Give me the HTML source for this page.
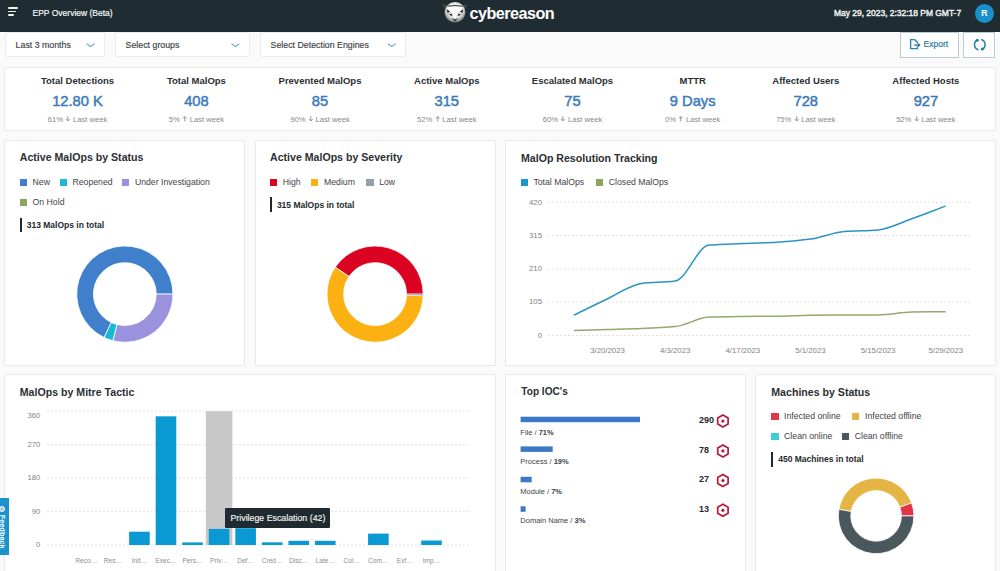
<!DOCTYPE html><html><head><meta charset="utf-8"><style>
html,body{margin:0;padding:0;}
body{width:1000px;height:571px;overflow:hidden;position:relative;background:#fafafa;font-family:"Liberation Sans", sans-serif;}
.t{position:absolute;white-space:nowrap;line-height:1;}
.card{position:absolute;background:#fff;border:1px solid #e9e9e9;box-sizing:border-box;border-radius:2px;}
svg{position:absolute;left:0;top:0;}
</style></head><body>
<div style="position:absolute;left:0px;top:0px;width:1000px;height:32px;background:#1f2d32;"></div>
<div style="position:absolute;left:7.9px;top:7.25px;width:10.5px;height:1.7px;background:#eef1f2;border-radius:1px;"></div>
<div style="position:absolute;left:7.9px;top:10.55px;width:8.1px;height:1.7px;background:#eef1f2;border-radius:1px;"></div>
<div style="position:absolute;left:7.9px;top:13.85px;width:5.7px;height:1.7px;background:#eef1f2;border-radius:1px;"></div>
<div class="t" style="left:32.50px;top:8.60px;font-size:8.5px;color:#f2f4f5;font-weight:400;-webkit-text-stroke:0.2px #f2f4f5;">EPP Overview (Beta)</div>
<div class="t" style="left:834.00px;top:8.65px;font-size:8.45px;color:#f2f3f4;font-weight:400;-webkit-text-stroke:0.4px #f2f3f4;">May 29, 2023, 2:32:18 PM GMT-7</div>
<div style="position:absolute;left:974.8px;top:3.5px;width:19px;height:19px;border-radius:50%;background:#1b8fc9;"></div>
<div class="t" style="left:684.40px;width:600px;text-align:center;top:8.72px;font-size:8.6px;color:#fff;font-weight:700;">R</div>
<div class="t" style="left:469.60px;top:5.09px;font-size:16.2px;color:#fff;font-weight:700;letter-spacing:-0.55px;">cybereason</div>
<div style="position:absolute;left:5px;top:32px;width:100px;height:25px;background:#fff;border:1px solid #ececec;box-sizing:border-box;border-radius:2px;"></div>
<div class="t" style="left:15.60px;top:41.15px;font-size:8.8px;color:#3d4246;font-weight:400;-webkit-text-stroke:0.15px #3d4246;">Last 3 months</div>
<div style="position:absolute;left:115px;top:32px;width:135px;height:25px;background:#fff;border:1px solid #ececec;box-sizing:border-box;border-radius:2px;"></div>
<div class="t" style="left:125.60px;top:41.15px;font-size:8.8px;color:#3d4246;font-weight:400;-webkit-text-stroke:0.15px #3d4246;">Select groups</div>
<div style="position:absolute;left:260px;top:32px;width:146px;height:25px;background:#fff;border:1px solid #ececec;box-sizing:border-box;border-radius:2px;"></div>
<div class="t" style="left:270.60px;top:41.15px;font-size:8.8px;color:#3d4246;font-weight:400;-webkit-text-stroke:0.15px #3d4246;">Select Detection Engines</div>
<div style="position:absolute;left:900px;top:32px;width:58.6px;height:25.6px;background:#fff;border:1px solid #b9cdd5;box-sizing:border-box;"></div>
<div class="t" style="left:923.60px;top:39.60px;font-size:8.5px;color:#2b7ca0;font-weight:400;-webkit-text-stroke:0.2px #2b7ca0;">Export</div>
<div style="position:absolute;left:963px;top:32px;width:32.3px;height:25.6px;background:#fff;border:1px solid #b9cdd5;box-sizing:border-box;"></div>
<div class="card" style="left:4px;top:67px;width:992px;height:64px;"></div>
<div class="t" style="left:-222.50px;width:600px;text-align:center;top:76.26px;font-size:9.5px;color:#2b2f33;font-weight:700;">Total Detections</div>
<div class="t" style="left:-222.50px;width:600px;text-align:center;top:93.56px;font-size:14.7px;color:#3d7aba;font-weight:400;-webkit-text-stroke:0.5px #3d7aba;">12.80 K</div>
<div class="t" style="left:-222.50px;width:600px;text-align:center;top:115.87px;font-size:7.6px;color:#878787;font-weight:400;">61%<svg style="position:static;display:inline-block;vertical-align:0px;margin:0 2.2px 0 2.4px" width="5.5" height="5.6" viewBox="0 0 5.5 5.6"><path d="M2.75,0.2 V5 M0.9,3.1 L2.75,5 L4.6,3.1" fill="none" stroke="#8a8a8a" stroke-width="0.9"/></svg>Last week</div>
<div class="t" style="left:-103.60px;width:600px;text-align:center;top:76.26px;font-size:9.5px;color:#2b2f33;font-weight:700;">Total MalOps</div>
<div class="t" style="left:-103.60px;width:600px;text-align:center;top:93.56px;font-size:14.7px;color:#3d7aba;font-weight:400;-webkit-text-stroke:0.5px #3d7aba;">408</div>
<div class="t" style="left:-103.60px;width:600px;text-align:center;top:115.87px;font-size:7.6px;color:#878787;font-weight:400;">5%<svg style="position:static;display:inline-block;vertical-align:0px;margin:0 2.2px 0 2.4px" width="5.5" height="5.6" viewBox="0 0 5.5 5.6"><path d="M2.75,5.4 V0.6 M0.9,2.5 L2.75,0.6 L4.6,2.5" fill="none" stroke="#8a8a8a" stroke-width="0.9"/></svg>Last week</div>
<div class="t" style="left:20.00px;width:600px;text-align:center;top:76.26px;font-size:9.5px;color:#2b2f33;font-weight:700;">Prevented MalOps</div>
<div class="t" style="left:20.00px;width:600px;text-align:center;top:93.56px;font-size:14.7px;color:#3d7aba;font-weight:400;-webkit-text-stroke:0.5px #3d7aba;">85</div>
<div class="t" style="left:20.00px;width:600px;text-align:center;top:115.87px;font-size:7.6px;color:#878787;font-weight:400;">90%<svg style="position:static;display:inline-block;vertical-align:0px;margin:0 2.2px 0 2.4px" width="5.5" height="5.6" viewBox="0 0 5.5 5.6"><path d="M2.75,0.2 V5 M0.9,3.1 L2.75,5 L4.6,3.1" fill="none" stroke="#8a8a8a" stroke-width="0.9"/></svg>Last week</div>
<div class="t" style="left:146.80px;width:600px;text-align:center;top:76.26px;font-size:9.5px;color:#2b2f33;font-weight:700;">Active MalOps</div>
<div class="t" style="left:146.80px;width:600px;text-align:center;top:93.56px;font-size:14.7px;color:#3d7aba;font-weight:400;-webkit-text-stroke:0.5px #3d7aba;">315</div>
<div class="t" style="left:146.80px;width:600px;text-align:center;top:115.87px;font-size:7.6px;color:#878787;font-weight:400;">52%<svg style="position:static;display:inline-block;vertical-align:0px;margin:0 2.2px 0 2.4px" width="5.5" height="5.6" viewBox="0 0 5.5 5.6"><path d="M2.75,5.4 V0.6 M0.9,2.5 L2.75,0.6 L4.6,2.5" fill="none" stroke="#8a8a8a" stroke-width="0.9"/></svg>Last week</div>
<div class="t" style="left:272.50px;width:600px;text-align:center;top:76.26px;font-size:9.5px;color:#2b2f33;font-weight:700;">Escalated MalOps</div>
<div class="t" style="left:272.50px;width:600px;text-align:center;top:93.56px;font-size:14.7px;color:#3d7aba;font-weight:400;-webkit-text-stroke:0.5px #3d7aba;">75</div>
<div class="t" style="left:272.50px;width:600px;text-align:center;top:115.87px;font-size:7.6px;color:#878787;font-weight:400;">60%<svg style="position:static;display:inline-block;vertical-align:0px;margin:0 2.2px 0 2.4px" width="5.5" height="5.6" viewBox="0 0 5.5 5.6"><path d="M2.75,0.2 V5 M0.9,3.1 L2.75,5 L4.6,3.1" fill="none" stroke="#8a8a8a" stroke-width="0.9"/></svg>Last week</div>
<div class="t" style="left:392.70px;width:600px;text-align:center;top:76.26px;font-size:9.5px;color:#2b2f33;font-weight:700;">MTTR</div>
<div class="t" style="left:392.70px;width:600px;text-align:center;top:93.56px;font-size:14.7px;color:#3d7aba;font-weight:400;-webkit-text-stroke:0.5px #3d7aba;">9 Days</div>
<div class="t" style="left:392.70px;width:600px;text-align:center;top:115.87px;font-size:7.6px;color:#878787;font-weight:400;">0%<svg style="position:static;display:inline-block;vertical-align:0px;margin:0 2.2px 0 2.4px" width="5.5" height="5.6" viewBox="0 0 5.5 5.6"><path d="M2.75,5.4 V0.6 M0.9,2.5 L2.75,0.6 L4.6,2.5" fill="none" stroke="#8a8a8a" stroke-width="0.9"/></svg>Last week</div>
<div class="t" style="left:505.80px;width:600px;text-align:center;top:76.26px;font-size:9.5px;color:#2b2f33;font-weight:700;">Affected Users</div>
<div class="t" style="left:505.80px;width:600px;text-align:center;top:93.56px;font-size:14.7px;color:#3d7aba;font-weight:400;-webkit-text-stroke:0.5px #3d7aba;">728</div>
<div class="t" style="left:505.80px;width:600px;text-align:center;top:115.87px;font-size:7.6px;color:#878787;font-weight:400;">75%<svg style="position:static;display:inline-block;vertical-align:0px;margin:0 2.2px 0 2.4px" width="5.5" height="5.6" viewBox="0 0 5.5 5.6"><path d="M2.75,0.2 V5 M0.9,3.1 L2.75,5 L4.6,3.1" fill="none" stroke="#8a8a8a" stroke-width="0.9"/></svg>Last week</div>
<div class="t" style="left:625.90px;width:600px;text-align:center;top:76.26px;font-size:9.5px;color:#2b2f33;font-weight:700;">Affected Hosts</div>
<div class="t" style="left:625.90px;width:600px;text-align:center;top:93.56px;font-size:14.7px;color:#3d7aba;font-weight:400;-webkit-text-stroke:0.5px #3d7aba;">927</div>
<div class="t" style="left:625.90px;width:600px;text-align:center;top:115.87px;font-size:7.6px;color:#878787;font-weight:400;">52%<svg style="position:static;display:inline-block;vertical-align:0px;margin:0 2.2px 0 2.4px" width="5.5" height="5.6" viewBox="0 0 5.5 5.6"><path d="M2.75,0.2 V5 M0.9,3.1 L2.75,5 L4.6,3.1" fill="none" stroke="#8a8a8a" stroke-width="0.9"/></svg>Last week</div>
<div class="card" style="left:4px;top:140px;width:241px;height:225.5px;"></div>
<div class="card" style="left:255px;top:140px;width:241px;height:225.5px;"></div>
<div class="card" style="left:505px;top:140px;width:491px;height:225.5px;"></div>
<div class="card" style="left:4px;top:374.4px;width:492px;height:210px;"></div>
<div class="card" style="left:505px;top:374.4px;width:241px;height:210px;"></div>
<div class="card" style="left:755px;top:374.4px;width:241px;height:210px;"></div>
<div class="t" style="left:19.80px;top:152.33px;font-size:10.6px;color:#2b2f33;font-weight:700;">Active MalOps by Status</div>
<div style="position:absolute;left:19.8px;top:178.9px;width:7.3px;height:7.2px;background:#3f7fcb;"></div>
<div class="t" style="left:32.60px;top:178.14px;font-size:8.7px;color:#3f4447;font-weight:400;">New</div>
<div style="position:absolute;left:59.7px;top:178.9px;width:7.3px;height:7.2px;background:#1fb6d8;"></div>
<div class="t" style="left:72.50px;top:178.14px;font-size:8.7px;color:#3f4447;font-weight:400;">Reopened</div>
<div style="position:absolute;left:122.1px;top:178.9px;width:7.3px;height:7.2px;background:#9b92dd;"></div>
<div class="t" style="left:134.90px;top:178.14px;font-size:8.7px;color:#3f4447;font-weight:400;">Under Investigation</div>
<div style="position:absolute;left:19.8px;top:198.9px;width:7.3px;height:7.2px;background:#8da65e;"></div>
<div class="t" style="left:32.60px;top:198.14px;font-size:8.7px;color:#3f4447;font-weight:400;">On Hold</div>
<div style="position:absolute;left:19.8px;top:217.6px;width:2px;height:14.8px;background:#1f2a2f;"></div>
<div class="t" style="left:26.70px;top:221.20px;font-size:8.5px;color:#24292d;font-weight:700;">313 MalOps in total</div>
<div class="t" style="left:270.00px;top:152.33px;font-size:10.6px;color:#2b2f33;font-weight:700;">Active MalOps by Severity</div>
<div style="position:absolute;left:270px;top:178.7px;width:7.3px;height:7.2px;background:#dc0322;"></div>
<div class="t" style="left:282.80px;top:177.94px;font-size:8.7px;color:#3f4447;font-weight:400;">High</div>
<div style="position:absolute;left:311.2px;top:178.7px;width:7.3px;height:7.2px;background:#fcb112;"></div>
<div class="t" style="left:324.00px;top:177.94px;font-size:8.7px;color:#3f4447;font-weight:400;">Medium</div>
<div style="position:absolute;left:366.4px;top:178.7px;width:7.3px;height:7.2px;background:#8fa1aa;"></div>
<div class="t" style="left:379.20px;top:177.94px;font-size:8.7px;color:#3f4447;font-weight:400;">Low</div>
<div style="position:absolute;left:270px;top:197.1px;width:2px;height:14.8px;background:#1f2a2f;"></div>
<div class="t" style="left:276.90px;top:200.70px;font-size:8.5px;color:#24292d;font-weight:700;">315 MalOps in total</div>
<div class="t" style="left:521.00px;top:152.63px;font-size:10.6px;color:#2b2f33;font-weight:700;">MalOp Resolution Tracking</div>
<div style="position:absolute;left:520.6px;top:178.7px;width:7.3px;height:7.2px;background:#1a97c9;"></div>
<div class="t" style="left:533.40px;top:177.94px;font-size:8.7px;color:#3f4447;font-weight:400;">Total MalOps</div>
<div style="position:absolute;left:596px;top:178.7px;width:7.3px;height:7.2px;background:#8aa65a;"></div>
<div class="t" style="left:608.80px;top:177.94px;font-size:8.7px;color:#3f4447;font-weight:400;">Closed MalOps</div>
<div class="t" style="left:19.80px;top:386.73px;font-size:10.6px;color:#2b2f33;font-weight:700;">MalOps by Mitre Tactic</div>
<div class="t" style="left:521.30px;top:387.45px;font-size:10.1px;color:#2b2f33;font-weight:700;">Top IOC's</div>
<div class="t" style="left:771.30px;top:387.13px;font-size:10.6px;color:#2b2f33;font-weight:700;">Machines by Status</div>
<div style="position:absolute;left:771.3px;top:413.0px;width:7.3px;height:7.2px;background:#e0354a;"></div>
<div class="t" style="left:784.10px;top:412.24px;font-size:8.7px;color:#3f4447;font-weight:400;">Infected online</div>
<div style="position:absolute;left:852.2px;top:413.0px;width:7.3px;height:7.2px;background:#e5b444;"></div>
<div class="t" style="left:865.00px;top:412.24px;font-size:8.7px;color:#3f4447;font-weight:400;">Infected offline</div>
<div style="position:absolute;left:771.3px;top:433.2px;width:7.3px;height:7.2px;background:#3bcfd4;"></div>
<div class="t" style="left:784.10px;top:432.44px;font-size:8.7px;color:#3f4447;font-weight:400;">Clean online</div>
<div style="position:absolute;left:841.9px;top:433.2px;width:7.3px;height:7.2px;background:#4a585e;"></div>
<div class="t" style="left:854.70px;top:432.44px;font-size:8.7px;color:#3f4447;font-weight:400;">Clean offline</div>
<div style="position:absolute;left:771.3px;top:451.8px;width:2px;height:14.8px;background:#1f2a2f;"></div>
<div class="t" style="left:778.20px;top:455.40px;font-size:8.5px;color:#24292d;font-weight:700;">450 Machines in total</div>
<svg width="1000" height="571" viewBox="0 0 1000 571"><defs><radialGradient id="owlg" cx="0.5" cy="0.4" r="0.6"><stop offset="0" stop-color="#ffffff"/><stop offset="0.6" stop-color="#e8e8e8"/><stop offset="0.85" stop-color="#9a9fa1"/><stop offset="1" stop-color="#4a5256"/></radialGradient></defs><path d="M442.4,4.0 L448.4,6.0 L445.4,10.4 Z" fill="#3d4649"/><path d="M467.6,4.0 L461.6,6.0 L464.6,10.4 Z" fill="#3d4649"/><circle cx="455" cy="12.3" r="10.4" fill="url(#owlg)"/><path d="M447.4,6.2 Q455,4.9 462.6,6.2" fill="none" stroke="#30383b" stroke-width="1"/><path d="M445.9,8.4 Q445.8,15.2 453.2,17.0 Q452.6,11.0 445.9,8.4 Z" fill="#dadada"/><path d="M464.1,8.4 Q464.2,15.2 456.8,17.0 Q457.4,11.0 464.1,8.4 Z" fill="#dadada"/><path d="M446.7,9.4 Q446.9,14.6 452.6,16.1 Q451.9,11.4 446.7,9.4 Z" fill="#2a3235"/><path d="M463.3,9.4 Q463.1,14.6 457.4,16.1 Q458.1,11.4 463.3,9.4 Z" fill="#2a3235"/><ellipse cx="449.6" cy="13.2" rx="1.4" ry="1.1" fill="#f4f4f4"/><ellipse cx="460.4" cy="13.2" rx="1.4" ry="1.1" fill="#f4f4f4"/><path d="M447.0,7.0 L463.0,7.0 L455,18.6 Z" fill="#fdfdfd"/><path d="M451.8,18.0 L455,21.6 L458.2,18.0 L455,19.6 Z" fill="#2a3235"/><path d="M86.7,43.8 L90.6,46.5 L94.5,43.8" fill="none" stroke="#78b0c6" stroke-width="1.25"/><path d="M231.5,43.8 L235.4,46.5 L239.3,43.8" fill="none" stroke="#78b0c6" stroke-width="1.25"/><path d="M387.9,43.8 L391.8,46.5 L395.7,43.8" fill="none" stroke="#78b0c6" stroke-width="1.25"/><path d="M914.6,39.6 H910.6 V48.6 H917.4 V46.6 M917.4,43.6 V42.4 L914.6,39.6" fill="none" stroke="#2e86ac" stroke-width="1.4"/><path d="M914.2,45.1 H919.6 M918.0,43.6 L919.6,45.1 L918.0,46.6" fill="none" stroke="#1f6f8e" stroke-width="1.3"/><path d="M977.81,39.69 A5.3,5.3 0 0 0 978.43,49.72" fill="none" stroke="#1f7fa6" stroke-width="1.5"/><path d="M981.79,49.51 A5.3,5.3 0 0 0 981.17,39.48" fill="none" stroke="#1f7fa6" stroke-width="1.5"/><circle cx="977.3" cy="40.3" r="1.5" fill="#1f7fa6"/><circle cx="982.3" cy="49.0" r="1.5" fill="#1f7fa6"/></svg>
<svg width="1000" height="571" viewBox="0 0 1000 571"><path d="M104.14,337.51 A48.1,48.1 0 1 1 172.95,294.10 L156.25,294.10 A31.4,31.4 0 1 0 111.33,322.44 Z" fill="#3f7fcb" stroke="#fff" stroke-width="0.8"/><path d="M172.95,294.10 A48.1,48.1 0 0 1 112.81,340.67 L116.99,324.50 A31.4,31.4 0 0 0 156.25,294.10 Z" fill="#9b92dd" stroke="#fff" stroke-width="0.8"/><path d="M112.81,340.67 A48.1,48.1 0 0 1 104.14,337.51 L111.33,322.44 A31.4,31.4 0 0 0 116.99,324.50 Z" fill="#17b7d8" stroke="#fff" stroke-width="0.8"/><path d="M335.22,267.20 A48.1,48.1 0 0 1 423.20,294.10 L406.50,294.10 A31.4,31.4 0 0 0 349.07,276.54 Z" fill="#dc0322" stroke="#fff" stroke-width="0.8"/><path d="M423.17,295.78 A48.1,48.1 0 1 1 335.22,267.20 L349.07,276.54 A31.4,31.4 0 1 0 406.48,295.20 Z" fill="#fcb112" stroke="#fff" stroke-width="0.8"/><path d="M423.20,294.10 A48.1,48.1 0 0 1 423.17,295.78 L406.48,295.20 A31.4,31.4 0 0 0 406.50,294.10 Z" fill="#8fa1aa" stroke="#fff" stroke-width="0.4"/><path d="M838.87,509.34 A37.8,37.8 0 0 1 911.62,502.97 L899.87,507.25 A25.3,25.3 0 0 0 851.18,511.51 Z" fill="#e5b444" stroke="#fff" stroke-width="0.8"/><path d="M911.62,502.97 A37.8,37.8 0 0 1 913.90,515.90 L901.40,515.90 A25.3,25.3 0 0 0 899.87,507.25 Z" fill="#e23448" stroke="#fff" stroke-width="0.8"/><path d="M913.90,515.90 A37.8,37.8 0 1 1 838.87,509.34 L851.18,511.51 A25.3,25.3 0 1 0 901.40,515.90 Z" fill="#4a585e" stroke="#fff" stroke-width="0.8"/><line x1="548" y1="202.3" x2="971" y2="202.3" stroke="#e2e2e2" stroke-width="1" stroke-dasharray="2,2"/><line x1="548" y1="235.6" x2="971" y2="235.6" stroke="#e2e2e2" stroke-width="1" stroke-dasharray="2,2"/><line x1="548" y1="268.9" x2="971" y2="268.9" stroke="#e2e2e2" stroke-width="1" stroke-dasharray="2,2"/><line x1="548" y1="302.2" x2="971" y2="302.2" stroke="#e2e2e2" stroke-width="1" stroke-dasharray="2,2"/><line x1="548" y1="335.5" x2="971" y2="335.5" stroke="#e2e2e2" stroke-width="1" stroke-dasharray="2,2"/><path d="M573.80,315.20 C585.07,309.71 596.33,303.99 607.60,298.71 C618.87,293.43 630.13,284.94 641.40,283.49 C652.67,282.04 663.93,282.53 675.20,280.95 C686.47,279.37 697.73,246.13 709.00,245.11 C720.27,244.10 731.53,244.00 742.80,243.53 C754.07,243.06 765.33,242.86 776.60,242.26 C787.87,241.66 799.13,240.58 810.40,239.09 C821.67,237.60 832.93,232.35 844.20,231.48 C855.47,230.60 866.73,230.82 878.00,229.89 C889.27,228.97 900.53,222.74 911.80,218.79 C923.07,214.84 934.33,210.33 945.60,206.11" fill="none" stroke="#2b94c0" stroke-width="1.5"/><path d="M573.80,330.43 C585.07,330.11 596.33,329.79 607.60,329.47 C618.87,329.16 630.13,328.95 641.40,328.52 C652.67,328.10 663.93,327.68 675.20,326.62 C686.47,325.56 697.73,317.50 709.00,317.11 C720.27,316.71 731.53,316.61 742.80,316.47 C754.07,316.33 765.33,316.31 776.60,316.15 C787.87,316.00 799.13,315.36 810.40,315.20 C821.67,315.04 832.93,314.89 844.20,314.89 C855.47,314.89 866.73,314.89 878.00,314.89 C889.27,314.89 900.53,312.22 911.80,312.03 C923.07,311.84 934.33,311.82 945.60,311.71" fill="none" stroke="#95a86d" stroke-width="1.5"/><line x1="47" y1="411.2" x2="471" y2="411.2" stroke="#e2e2e2" stroke-width="1" stroke-dasharray="2,2"/><line x1="47" y1="444.6" x2="471" y2="444.6" stroke="#e2e2e2" stroke-width="1" stroke-dasharray="2,2"/><line x1="47" y1="478.1" x2="471" y2="478.1" stroke="#e2e2e2" stroke-width="1" stroke-dasharray="2,2"/><line x1="47" y1="511.6" x2="471" y2="511.6" stroke="#e2e2e2" stroke-width="1" stroke-dasharray="2,2"/><line x1="47" y1="545.0" x2="471" y2="545.0" stroke="#e2e2e2" stroke-width="1" stroke-dasharray="2,2"/><rect x="205.80" y="411.2" width="26.55" height="133.80" fill="#c8c8c8"/><rect x="129.12" y="531.70" width="20.6" height="13.30" fill="#0b99d3"/><rect x="155.67" y="416.30" width="20.6" height="128.70" fill="#0b99d3"/><rect x="182.22" y="542.40" width="20.6" height="2.60" fill="#0b99d3"/><rect x="208.78" y="528.90" width="20.6" height="16.10" fill="#0b99d3"/><rect x="235.32" y="528.20" width="20.6" height="16.80" fill="#0b99d3"/><rect x="261.88" y="542.30" width="20.6" height="2.70" fill="#0b99d3"/><rect x="288.43" y="540.80" width="20.6" height="4.20" fill="#0b99d3"/><rect x="314.98" y="540.80" width="20.6" height="4.20" fill="#0b99d3"/><rect x="368.08" y="533.60" width="20.6" height="11.40" fill="#0b99d3"/><rect x="421.18" y="540.50" width="20.6" height="4.50" fill="#0b99d3"/><rect x="520.6" y="416.7" width="119.4" height="5.5" fill="#3b78c6"/><rect x="520.6" y="446.4" width="32.1" height="5.5" fill="#3b78c6"/><rect x="520.6" y="476.8" width="11.1" height="5.5" fill="#3b78c6"/><rect x="520.6" y="506.3" width="5" height="5.5" fill="#3b78c6"/><polygon points="722.90,415.10 728.10,418.10 728.10,424.10 722.90,427.10 717.70,424.10 717.70,418.10" fill="none" stroke="#b8193a" stroke-width="1.7"/><circle cx="722.9" cy="421.1" r="1.6" fill="#b8193a"/><polygon points="722.90,444.90 728.10,447.90 728.10,453.90 722.90,456.90 717.70,453.90 717.70,447.90" fill="none" stroke="#b8193a" stroke-width="1.7"/><circle cx="722.9" cy="450.9" r="1.6" fill="#b8193a"/><polygon points="722.90,474.60 728.10,477.60 728.10,483.60 722.90,486.60 717.70,483.60 717.70,477.60" fill="none" stroke="#b8193a" stroke-width="1.7"/><circle cx="722.9" cy="480.6" r="1.6" fill="#b8193a"/><polygon points="722.90,504.30 728.10,507.30 728.10,513.30 722.90,516.30 717.70,513.30 717.70,507.30" fill="none" stroke="#b8193a" stroke-width="1.7"/><circle cx="722.9" cy="510.3" r="1.6" fill="#b8193a"/></svg>
<div class="t" style="left:-58.00px;width:600px;text-align:right;top:198.50px;font-size:7.8px;color:#838383;font-weight:400;">420</div>
<div class="t" style="left:-58.00px;width:600px;text-align:right;top:231.80px;font-size:7.8px;color:#838383;font-weight:400;">315</div>
<div class="t" style="left:-58.00px;width:600px;text-align:right;top:265.10px;font-size:7.8px;color:#838383;font-weight:400;">210</div>
<div class="t" style="left:-58.00px;width:600px;text-align:right;top:298.40px;font-size:7.8px;color:#838383;font-weight:400;">105</div>
<div class="t" style="left:-58.00px;width:600px;text-align:right;top:331.70px;font-size:7.8px;color:#838383;font-weight:400;">0</div>
<div class="t" style="left:307.50px;width:600px;text-align:center;top:347.20px;font-size:7.8px;color:#838383;font-weight:400;">3/20/2023</div>
<div class="t" style="left:375.15px;width:600px;text-align:center;top:347.20px;font-size:7.8px;color:#838383;font-weight:400;">4/3/2023</div>
<div class="t" style="left:442.80px;width:600px;text-align:center;top:347.20px;font-size:7.8px;color:#838383;font-weight:400;">4/17/2023</div>
<div class="t" style="left:510.45px;width:600px;text-align:center;top:347.20px;font-size:7.8px;color:#838383;font-weight:400;">5/1/2023</div>
<div class="t" style="left:578.10px;width:600px;text-align:center;top:347.20px;font-size:7.8px;color:#838383;font-weight:400;">5/15/2023</div>
<div class="t" style="left:645.75px;width:600px;text-align:center;top:347.20px;font-size:7.8px;color:#838383;font-weight:400;">5/29/2023</div>
<div class="t" style="left:-559.80px;width:600px;text-align:right;top:411.77px;font-size:7.6px;color:#838383;font-weight:400;">360</div>
<div class="t" style="left:-559.80px;width:600px;text-align:right;top:441.02px;font-size:7.6px;color:#838383;font-weight:400;">270</div>
<div class="t" style="left:-559.80px;width:600px;text-align:right;top:474.47px;font-size:7.6px;color:#838383;font-weight:400;">180</div>
<div class="t" style="left:-559.80px;width:600px;text-align:right;top:507.92px;font-size:7.6px;color:#838383;font-weight:400;">90</div>
<div class="t" style="left:-559.80px;width:600px;text-align:right;top:541.37px;font-size:7.6px;color:#838383;font-weight:400;">0</div>
<div class="t" style="left:-213.68px;width:600px;text-align:center;top:557.81px;font-size:6.6px;color:#8e8e8e;font-weight:400;">Reco…</div>
<div class="t" style="left:-187.12px;width:600px;text-align:center;top:557.81px;font-size:6.6px;color:#8e8e8e;font-weight:400;">Res…</div>
<div class="t" style="left:-160.57px;width:600px;text-align:center;top:557.81px;font-size:6.6px;color:#8e8e8e;font-weight:400;">Init…</div>
<div class="t" style="left:-134.02px;width:600px;text-align:center;top:557.81px;font-size:6.6px;color:#8e8e8e;font-weight:400;">Exec…</div>
<div class="t" style="left:-107.47px;width:600px;text-align:center;top:557.81px;font-size:6.6px;color:#8e8e8e;font-weight:400;">Pers…</div>
<div class="t" style="left:-80.92px;width:600px;text-align:center;top:557.81px;font-size:6.6px;color:#8e8e8e;font-weight:400;">Priv…</div>
<div class="t" style="left:-54.38px;width:600px;text-align:center;top:557.81px;font-size:6.6px;color:#8e8e8e;font-weight:400;">Def…</div>
<div class="t" style="left:-27.82px;width:600px;text-align:center;top:557.81px;font-size:6.6px;color:#8e8e8e;font-weight:400;">Cred…</div>
<div class="t" style="left:-1.27px;width:600px;text-align:center;top:557.81px;font-size:6.6px;color:#8e8e8e;font-weight:400;">Disc…</div>
<div class="t" style="left:25.28px;width:600px;text-align:center;top:557.81px;font-size:6.6px;color:#8e8e8e;font-weight:400;">Late…</div>
<div class="t" style="left:51.82px;width:600px;text-align:center;top:557.81px;font-size:6.6px;color:#8e8e8e;font-weight:400;">Col…</div>
<div class="t" style="left:78.38px;width:600px;text-align:center;top:557.81px;font-size:6.6px;color:#8e8e8e;font-weight:400;">Com…</div>
<div class="t" style="left:104.93px;width:600px;text-align:center;top:557.81px;font-size:6.6px;color:#8e8e8e;font-weight:400;">Exf…</div>
<div class="t" style="left:131.48px;width:600px;text-align:center;top:557.81px;font-size:6.6px;color:#8e8e8e;font-weight:400;">Imp…</div>
<div class="t" style="left:520.30px;top:428.65px;font-size:7.5px;color:#3a3f43;font-weight:400;">File / <b>71%</b></div>
<div class="t" style="left:698.90px;top:415.98px;font-size:9px;color:#24292d;font-weight:700;">290</div>
<div class="t" style="left:520.30px;top:458.05px;font-size:7.5px;color:#3a3f43;font-weight:400;">Process / <b>19%</b></div>
<div class="t" style="left:698.90px;top:445.78px;font-size:9px;color:#24292d;font-weight:700;">78</div>
<div class="t" style="left:520.30px;top:487.55px;font-size:7.5px;color:#3a3f43;font-weight:400;">Module / <b>7%</b></div>
<div class="t" style="left:698.90px;top:475.48px;font-size:9px;color:#24292d;font-weight:700;">27</div>
<div class="t" style="left:520.30px;top:517.35px;font-size:7.5px;color:#3a3f43;font-weight:400;">Domain Name / <b>3%</b></div>
<div class="t" style="left:698.90px;top:505.18px;font-size:9px;color:#24292d;font-weight:700;">13</div>
<div style="position:absolute;left:225.4px;top:507.8px;width:104.8px;height:20.4px;background:#1f2b30;border-radius:1px;"></div>
<div class="t" style="left:230.50px;top:514.35px;font-size:8.8px;color:#f4f4f4;font-weight:400;-webkit-text-stroke:0.15px #f4f4f4;">Privilege Escalation (42)</div>
<div style="position:absolute;left:0px;top:498.2px;width:8.8px;height:56.4px;background:#1a93cb;"></div>
<div class="t" style="left:-28.5px;width:60px;text-align:center;font-size:7.4px;font-weight:700;color:#fff;transform:rotate(90deg);transform-origin:30px 3.7px;top:527.8px;">Feedback</div>
<div style="position:absolute;left:-1.2px;top:505.8px;width:6.2px;height:6.2px;border-radius:50%;box-sizing:border-box;border:1.4px solid #fff;background:#9fc9dc;"></div>
</body></html>
